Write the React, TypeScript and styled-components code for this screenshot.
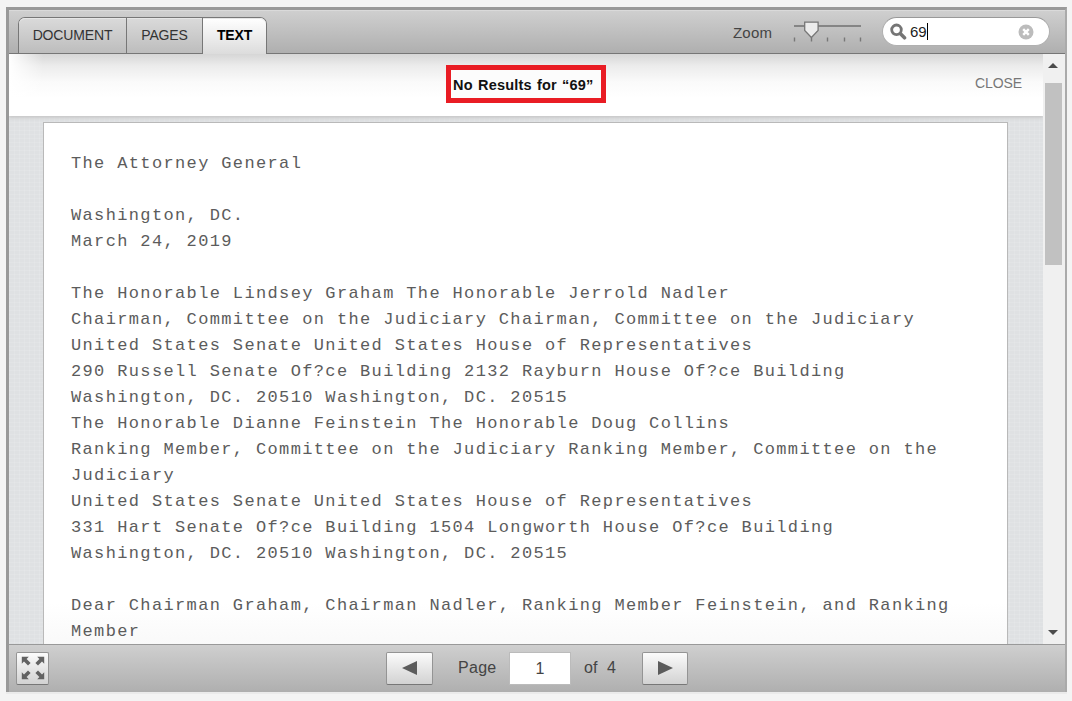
import React, { FC } from "react";
import styled, { createGlobalStyle, css } from "styled-components";

const LINES = [
    "The Attorney General",
    "",
    "Washington, DC.",
    "March 24, 2019",
    "",
    "The Honorable Lindsey Graham The Honorable Jerrold Nadler",
    "Chairman, Committee on the Judiciary Chairman, Committee on the Judiciary",
    "United States Senate United States House of Representatives",
    "290 Russell Senate Of?ce Building 2132 Rayburn House Of?ce Building",
    "Washington, DC. 20510 Washington, DC. 20515",
    "The Honorable Dianne Feinstein The Honorable Doug Collins",
    "Ranking Member, Committee on the Judiciary Ranking Member, Committee on the",
    "Judiciary",
    "United States Senate United States House of Representatives",
    "331 Hart Senate Of?ce Building 1504 Longworth House Of?ce Building",
    "Washington, DC. 20510 Washington, DC. 20515",
    "",
    "Dear Chairman Graham, Chairman Nadler, Ranking Member Feinstein, and Ranking",
    "Member",
];

const SliderIcon: FC = () => (
    <svg width="70" height="24" viewBox="0 0 70 24">
        <path d="M1 7h67" stroke="#858585" strokeWidth="2" />
        <path d="M1.5 18.5v4M18.5 18.5v4M34.5 18.5v4M51.5 18.5v4M67.5 18.5v4" stroke="#777" strokeWidth="1.4" />
        <path d="M11.7 3.2h13.4v8.3l-6.7 7-6.7-7z" fill="#ececec" stroke="#777" strokeWidth="1.3" />
    </svg>
);

const SearchIcon: FC = () => (
    <svg width="17" height="17" viewBox="0 0 17 17" fill="none" stroke="#757575">
        <circle cx="6.5" cy="6.8" r="4.8" strokeWidth="2.8" />
        <path d="M10.5 10.8l4 4" strokeWidth="3.6" strokeLinecap="round" />
    </svg>
);

const ClearIcon: FC = () => (
    <svg width="16" height="16" viewBox="0 0 16 16">
        <circle cx="8" cy="8" r="7.5" fill="#bcbcbc" />
        <path d="M5.2 5.2l5.6 5.6M10.8 5.2l-5.6 5.6" stroke="#fff" strokeWidth="2.4" />
    </svg>
);

const ExpandIcon: FC = () => (
    <svg width="24" height="24" viewBox="0 0 24 24" fill="#626262">
        {[0, 90, 180, 270].map((angle) => (
            <path key={angle} transform={`rotate(${angle} 12 12)`} d="M.8.8h7L5.6 3l4 4L7 9.6l-4-4L.8 7.8z" />
        ))}
    </svg>
);

const App: FC = () => (
    <>
        <GlobalStyle />
        <Viewer>
            <Header>
                <Tabs>
                    <Tab $width={107}>DOCUMENT</Tab>
                    <Tab $width={76}>PAGES</Tab>
                    <Tab $width={64} $active>
                        TEXT
                    </Tab>
                </Tabs>
                <Tools>
                    <ZoomLabel>Zoom</ZoomLabel>
                    <SliderIcon />
                    <SearchBox>
                        <SearchIcon />
                        <Query>69</Query>
                        <ClearIcon />
                    </SearchBox>
                </Tools>
            </Header>
            <Body>
                <Content>
                    <Results>
                        <ResultText>No Results for “69”</ResultText>
                        <CloseLabel>CLOSE</CloseLabel>
                    </Results>
                    <Paper>
                        {LINES.map((line, i) => (
                            <Line key={i}>{line}</Line>
                        ))}
                    </Paper>
                </Content>
                <Scrollbar>
                    <ScrollArrow>
                        <svg width="10" height="5" viewBox="0 0 10 5">
                            <path d="M0 5l5-5 5 5z" fill="#4b4b4b" />
                        </svg>
                    </ScrollArrow>
                    <Track>
                        <Thumb />
                    </Track>
                    <ScrollArrow>
                        <svg width="10" height="5" viewBox="0 0 10 5">
                            <path d="M0 0l5 5 5-5z" fill="#4b4b4b" />
                        </svg>
                    </ScrollArrow>
                </Scrollbar>
            </Body>
            <Footer>
                <Button $width={33}>
                    <ExpandIcon />
                </Button>
                <Pager>
                    <Button $width={47}>
                        <svg width="15" height="14" viewBox="0 0 15 14">
                            <path d="M0 7L15 0v14z" fill="#5c5c5c" />
                        </svg>
                    </Button>
                    <PageLabel>Page</PageLabel>
                    <PageNumber>1</PageNumber>
                    <PageTotal>of&nbsp; 4</PageTotal>
                    <Button $width={46}>
                        <svg width="15" height="14" viewBox="0 0 15 14">
                            <path d="M15 7L0 0v14z" fill="#5c5c5c" />
                        </svg>
                    </Button>
                </Pager>
            </Footer>
        </Viewer>
    </>
);

const GlobalStyle = createGlobalStyle`
    * {
        box-sizing: border-box;
    }

    body {
        margin: 0;
        height: 701px;
        overflow: hidden;
        background: #f4f4f4;
        font-family: "Liberation Sans", Arial, sans-serif;
    }

    #root {
        padding: 7px 5px 0 6px;
    }

    svg {
        display: block;
        flex: none;
    }
`;

const Viewer = styled.div`
    display: flex;
    flex-direction: column;
    width: 1061px;
    height: 685px;
    border: solid #999;
    border-width: 3px 2px 0 3px;
    border-right-color: #aaa;
    box-shadow: 0 2px 0 #ebebeb;
`;

const Header = styled.div`
    display: flex;
    justify-content: space-between;
    height: 44px;
    flex: none;
    border-top: 1px solid #dadada;
    border-bottom: 1px solid #767676;
    background: linear-gradient(#cfcfcf, #afafaf);
`;

const Tabs = styled.div`
    display: flex;
    height: 36px;
    margin: 6px 0 0 9px;
    border: 1px solid #777;
    border-bottom: 0;
    border-radius: 7px 7px 0 0;
`;

const Tab = styled.div<{ $width: number; $active?: boolean }>`
    width: ${(p) => p.$width}px;
    padding-top: 1px;
    border-radius: 6px 0 0 0;
    line-height: 33px;
    text-align: center;
    font-size: 14px;
    letter-spacing: -0.15px;
    color: #333;
    background: linear-gradient(#dadada, #bdbdbd);
    box-shadow: inset 0 1px 0 #e6e6e6;

    & + & {
        border-left: 1px solid #777;
        border-radius: 0;
    }

    ${(p) =>
        p.$active &&
        css`
            && {
                height: 36px;
                border-radius: 0 6px 0 0;
                color: #000;
                font-weight: bold;
                background: linear-gradient(#fff, #dcdcdc);
            }
        `}
`;

const Tools = styled.div`
    display: flex;
    align-items: flex-start;
    padding: 6px 15px 0 0;

    > svg {
        margin: 2px 19px 0 20px;
    }
`;

const ZoomLabel = styled.div`
    width: 40px;
    line-height: 31px;
    font-size: 15px;
    letter-spacing: 0.2px;
    color: #444;
`;

const SearchBox = styled.div`
    display: flex;
    align-items: center;
    width: 168px;
    height: 29px;
    padding: 0 15px 0 7px;
    border: 1px solid #b0b0b0;
    border-top-color: #999;
    border-radius: 15px;
    background: #fff;
`;

const Query = styled.div`
    height: 17px;
    margin: 0 auto 0 3px;
    border-right: 1px solid #000;
    line-height: 17px;
    font-size: 15px;
    color: #222;
`;

const Body = styled.div`
    display: flex;
    flex: 1;
    min-height: 0;
    background: #f0f0f0;
`;

const Content = styled.div`
    display: flex;
    flex-direction: column;
    align-items: flex-start;
    width: 1034px;
    overflow: hidden;
    background-color: #dfe1e3;
    background-image:
        repeating-linear-gradient(rgba(255, 255, 255, 0.1) 0 1px, transparent 1px 4px),
        repeating-linear-gradient(90deg, rgba(255, 255, 255, 0.1) 0 1px, transparent 1px 5px);
`;

const Results = styled.div`
    display: flex;
    justify-content: space-between;
    width: 100%;
    height: 62px;
    flex: none;
    padding: 11px 21px 0 437px;
    background:
        linear-gradient(90deg, #fff, rgba(255, 255, 255, 0) 34px),
        linear-gradient(#d6d6d6, #ececec 12px, #fafafa 28px, #fff 44px);
    box-shadow: 0 2px 3px #c8c8c8;
`;

const ResultText = styled.div`
    width: 160px;
    height: 38px;
    padding-left: 2px;
    border: 5px solid #e91c24;
    line-height: 30px;
    font-size: 14.5px;
    font-weight: bold;
    letter-spacing: 0.2px;
    word-spacing: 1px;
    white-space: nowrap;
    color: #111;
    background: #fcfcfc;
`;

const CloseLabel = styled.div`
    padding-top: 9px;
    line-height: 18px;
    font-size: 14px;
    letter-spacing: -0.1px;
    color: #777;
`;

const Paper = styled.div`
    width: 965px;
    height: 600px;
    flex: none;
    margin: 6px 0 0 34px;
    padding: 28px 0 0 27px;
    border: 1px solid #b9b9b9;
    background: linear-gradient(#fff 480px, #f9f9f9 522px);
`;

const Line = styled.div`
    height: 26px;
    line-height: 26px;
    white-space: pre;
    font-family: "Liberation Mono", "Courier New", monospace;
    font-size: 17px;
    letter-spacing: 1.36px;
    color: #5c5c5c;
`;

const Scrollbar = styled.div`
    display: flex;
    flex-direction: column;
    width: 20px;
    background: #f0f0f0;
`;

const ScrollArrow = styled.div`
    display: flex;
    align-items: center;
    justify-content: center;
    height: 23px;
`;

const Track = styled.div`
    flex: 1;
    padding: 6px 0 0 2px;
`;

const Thumb = styled.div`
    width: 17px;
    height: 182px;
    background: #c1c1c1;
`;

const Footer = styled.div`
    display: flex;
    height: 48px;
    flex: none;
    padding: 7px 0 0 7px;
    border-top: 1px solid #999;
    background: linear-gradient(#cfcfcf, #afafaf);
`;

const Button = styled.div<{ $width: number }>`
    display: flex;
    align-items: center;
    justify-content: center;
    width: ${(p) => p.$width}px;
    height: 33px;
    padding-bottom: 1px;
    border: 1px solid #949494;
    border-bottom-color: #777;
    border-radius: 2px;
    background: linear-gradient(#fbfbfb, #d2d2d2);
`;

const Pager = styled.div`
    display: flex;
    margin-left: 337px;
    line-height: 32px;
    font-size: 16px;
    color: #444;
`;

const PageLabel = styled.div`
    width: 76px;
    padding-left: 25px;
    letter-spacing: 0.3px;
`;

const PageNumber = styled.div`
    width: 62px;
    height: 33px;
    border: 1px solid #bbb;
    line-height: 31px;
    text-align: center;
    background: #fff;
`;

const PageTotal = styled.div`
    width: 71px;
    padding-left: 13px;
    letter-spacing: 0.2px;
`;

export default App;
